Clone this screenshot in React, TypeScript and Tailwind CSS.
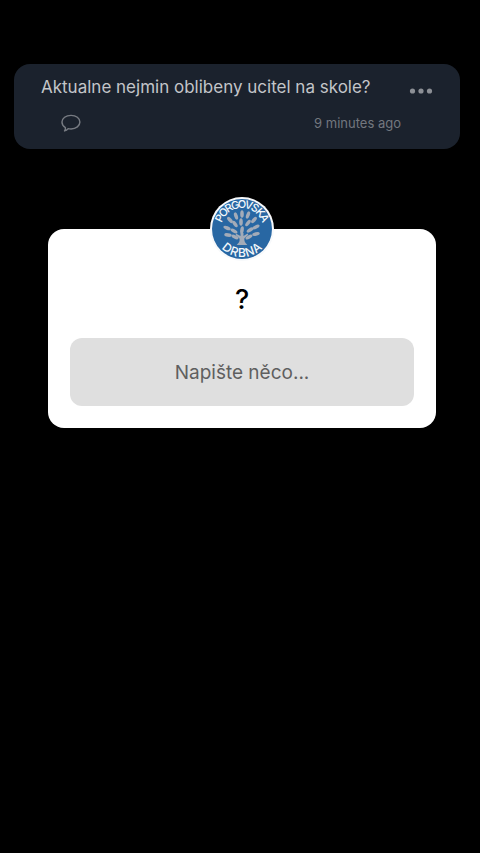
const upper = Array.from('PORGOVSKÁ');
const lower = Array.from('DRBNA');

const leaves = [
  [32, 17, 0], [26, 19, -18], [38, 18, 20], [20, 23, -42], [44, 23, 42],
  [31, 25, 0], [25, 27, -35], [38, 26, 38], [17, 31, -68], [46, 30, 64],
  [24, 34, -60], [40, 33, 58], [32, 33, 8], [18, 38, -82], [46, 37, 78],
  [25, 40, -62], [39, 40, 60],
];

function Logo() {
  return (
    <svg viewBox="0 0 64 64" className="size-16" role="img" aria-label="Porgovská drbna">
      <circle cx="32" cy="32" r="32" fill="#f7f9fb" />
      <circle cx="32" cy="32" r="30" fill="#2867a3" />
      <g fill="#a3abb8">
        {leaves.map(([x, y, angle]) => (
          <ellipse key={`${x}-${y}`} cx={x} cy={y} rx="1.8" ry="3.8" transform={`rotate(${angle} ${x} ${y})`} />
        ))}
        <path d="M30.500 36h3v3l4-2.500.8 1.200-4 3.800c0 3 .6 4 3 6.500H26.700c2.500-2.500 3.200-3.500 2.800-6.500l-4-3.500.8-1.200 4.200 2.300z" />
      </g>
      <g fill="#f3f8fb" fontFamily="Inter, sans-serif" fontSize="11" fontWeight="500" textAnchor="middle">
        {upper.map((letter, i) => (
          <text key={i} x="32" y="11" transform={`rotate(${(i - 4) * 16} 32 32)`}>{letter}</text>
        ))}
        {lower.map((letter, i) => (
          <text key={i} x="32" y="60" fontSize="12" transform={`rotate(${(2 - i) * 19} 32 32)`}>{letter}</text>
        ))}
      </g>
    </svg>
  );
}

export default function App() {
  return (
    <main className="min-h-screen bg-black pt-16 font-['Inter',sans-serif]">
      <article className="ml-3.5 mr-5 rounded-2xl bg-[#1b222d] pt-[11px] pb-3.5 px-[27px]">
        <div className="flex items-center justify-between">
          <h1 className="text-[17px] leading-6 whitespace-nowrap text-[#c3c5c9]">Aktualne nejmin oblibeny ucitel na skole?</h1>
          <button type="button" aria-label="More options" className="flex h-6 items-end pb-[5px] text-[#8c8f95]">
            <svg viewBox="0 0 24 6" className="h-1.5 w-6" fill="currentColor">
              <circle cx="3.500" cy="3" r="2.600" />
              <circle cx="12" cy="3" r="2.600" />
              <circle cx="20.500" cy="3" r="2.600" />
            </svg>
          </button>
        </div>
        <div className="mt-3 flex h-6 items-center justify-between pl-4 pr-8">
          <button type="button" aria-label="Comments" className="pl-1 text-[#777b82]">
            <svg viewBox="0 0 22 20" className="h-5 w-[21px]" fill="none" stroke="currentColor" strokeWidth="1.500" strokeLinejoin="round">
              <path d="M10.500 2c5.300 0 9.300 3 9.300 7s-4 7.200-9.300 7.200c-1 0-2-.1-3-.3-1 1.300-2.300 2.100-3.800 2.400.8-1 1.100-2.200.9-3.500C2.400 13.500 1 11.500 1 9c0-4 4.200-7 9.500-7z" />
            </svg>
          </button>
          <time className="text-[13px] leading-6 text-[#73777f]">9 minutes ago</time>
        </div>
      </article>

      <section className="relative mt-20 mr-11 ml-12 rounded-2xl bg-white px-[22px] pt-[55px] pb-[22px]">
        <div className="absolute -top-8 left-1/2 -translate-x-1/2">
          <Logo />
        </div>
        <label htmlFor="answer" className="block text-center text-[27px] leading-8 font-medium text-black">?</label>
        <input
          id="answer"
          type="text"
          placeholder="Napište něco..."
          className="mt-[22px] block h-17 w-full rounded-xl bg-[#dfdfdf] text-center text-[19px] text-[#5f5f5f] outline-none placeholder:text-[#5f5f5f]"
        />
      </section>
    </main>
  );
}
